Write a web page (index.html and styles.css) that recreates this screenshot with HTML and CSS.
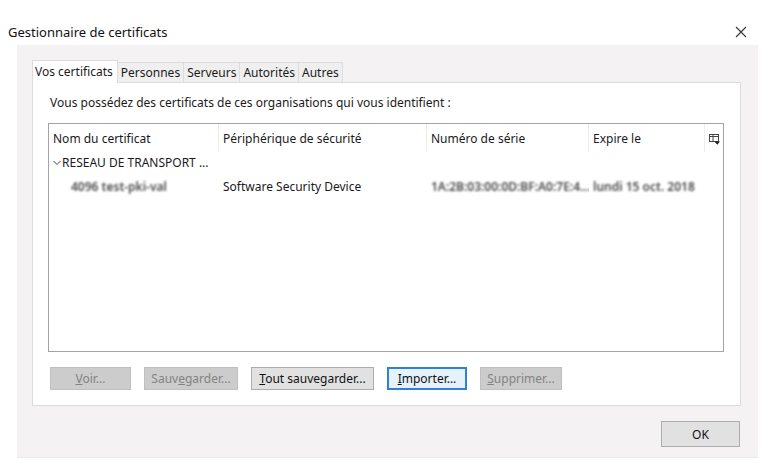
FILE: index.html
```html
<!DOCTYPE html>
<html lang="fr">
<head>
<meta charset="UTF-8">
<title>Gestionnaire de certificats</title>
<link rel="stylesheet" href="styles.css">
</head>
<body>
<div class="dialog">
  <!-- barre de titre -->
  <div class="titlebar">
    <span class="title">Gestionnaire de certificats</span>
    <span class="close">
      <svg width="12" height="12" viewBox="0 0 12 12"><path d="M1 1 L11 11 M11 1 L1 11" stroke="#333" stroke-width="1.1" fill="none"/></svg>
    </span>
  </div>

  <div class="panel">
    <div class="tabs">
      <div class="tab active">Vos certificats</div>
      <div class="tab">Personnes</div>
      <div class="tab">Serveurs</div>
      <div class="tab">Autorités</div>
      <div class="tab">Autres</div>
    </div>

    <div class="tab-body">
      <p class="intro">Vous possédez des certificats de ces organisations qui vous identifient :</p>

      <div class="tree">
        <div class="tree-head">
          <div class="col c1">Nom du certificat</div>
          <div class="col c2">Périphérique de sécurité</div>
          <div class="col c3">Numéro de série</div>
          <div class="col c4">Expire le</div>
          <div class="col c5">
            <svg width="11" height="11" viewBox="0 0 11 11">
              <rect x="0.5" y="0.5" width="9" height="7" fill="none" stroke="#444"/>
              <path d="M0.5 2.5 H9.5 M4 0.5 V7.5" stroke="#444" fill="none"/>
              <path d="M5.5 7.5 H11 L8.25 10.8 Z" fill="#222"/>
            </svg>
          </div>
        </div>
        <div class="tree-row group">
          <div class="col c1"><span class="twisty">
            <svg width="8" height="6" viewBox="0 0 8 6"><path d="M0.5 1 L4 4.5 L7.5 1" stroke="#444" fill="none"/></svg>
          </span>RESEAU DE TRANSPORT ...</div>
        </div>
        <div class="tree-row">
          <div class="col c1 child"><span class="blur">4096 test-pki-val</span></div>
          <div class="col c2">Software Security Device</div>
          <div class="col c3"><span class="blur">1A:2B:03:00:0D:BF:A0:7E:4...</span></div>
          <div class="col c4"><span class="blur">lundi 15 oct. 2018</span></div>
        </div>
      </div>

      <div class="actions">
        <button class="btn off w81"><u>V</u>oir...</button>
        <button class="btn off w94">Sauv<u>e</u>garder...</button>
        <button class="btn w123"><u>T</u>out sauvegarder...</button>
        <button class="btn focus w80"><u>I</u>mporter...</button>
        <button class="btn off w82"><u>S</u>upprimer...</button>
      </div>
    </div>

    <div class="footer">
      <button class="btn ok">OK</button>
    </div>
  </div>
</div>
</body>
</html>
```

FILE: styles.css
```css
body {
  margin: 0;
  background: #fff;
  font-family: 'Noto Sans', 'Open Sans', Arial, sans-serif;
  font-size: 12px;
  color: #1a1a1a;
}
.dialog {
  width: 778px;
  height: 468px;
  display: flex;
  flex-direction: column;
}
.titlebar {
  height: 45px;
  display: flex;
  align-items: center;
  justify-content: space-between;
  padding: 18px 31px 0 8px;
  box-sizing: border-box;
}
.title {
  font-size: 13px;
  color: #111;
}
.close {
  display: flex;
}
.panel {
  width: 741px;
  height: 413px;
  margin-left: 17px;
  background: #f5f2f4;
  box-sizing: border-box;
  padding: 16px 17px 0 15px;
  display: flex;
  flex-direction: column;
  border-bottom: 1px solid #ecebeb;
}
.tabs {
  display: flex;
  height: 21px;
  align-items: flex-end;
  position: relative;
  z-index: 1;
}
.tab {
  height: 20px;
  line-height: 19px;
  padding: 0 3px;
  box-sizing: border-box;
  border: 1px solid #dcdcdc;
  border-bottom: none;
  border-left: none;
  background: #f0eff0;
  color: #1a1a1a;
}
.tab.active {
  height: 23px;
  line-height: 21px;
  margin-bottom: -1px;
  background: #fff;
  border-left: 1px solid #dcdcdc;
  padding: 0 4px 0 2px;
}
.tab-body {
  height: 324px;
  background: #fff;
  border: 1px solid #dcdcdc;
  box-sizing: border-box;
  padding: 0 16px 0 15px;
  display: flex;
  flex-direction: column;
}
.intro {
  margin: 11px 0 0 2px;
  height: 18px;
  line-height: 18px;
}
.tree {
  margin-top: 11px;
  height: 229px;
  width: 676px;
  border: 1px solid #a4a4a4;
  box-sizing: border-box;
}
.tree-head, .tree-row {
  display: flex;
}
.tree-head {
  height: 28px;
}
.tree-head .col {
  border-right: 1px solid #ececec;
  line-height: 30px;
}
.tree-head .c5 {
  border-right: none;
  display: flex;
  align-items: center;
  justify-content: center;
  padding-top: 2px;
}
.tree-row {
  height: 22px;
  line-height: 22px;
}
.tree-row.group {
  height: 20px;
  line-height: 20px;
}
.tree-row:last-child {
  height: 30px;
  line-height: 30px;
}
.col {
  box-sizing: border-box;
  padding-left: 4px;
  white-space: nowrap;
  overflow: hidden;
}
.c1 { width: 170px; }
.c2 { width: 208px; }
.c3 { width: 162px; }
.c4 { width: 116px; }
.c5 { width: 18px; padding-left: 0; }
.twisty {
  display: inline-block;
  width: 9px;
  vertical-align: 1px;
}
.child { padding-left: 22px; }
.blur {
  color: #4a4a4a;
  font-weight: 600;
  filter: blur(1.2px);
}
.actions {
  display: flex;
  gap: 13px;
  margin-top: 15px;
  margin-left: 2px;
}
.btn {
  height: 23px;
  font-family: inherit;
  font-size: 12px;
  color: #111;
  background: #e1e1e1;
  border: 1px solid #adadad;
  padding: 0;
  box-sizing: border-box;
}
.btn.off {
  background: #cccccc;
  border-color: #bfbfbf;
  color: #838383;
}
.btn.focus {
  border: 2px solid #2f82d3;
  background: #e5f1fb;
}
.w81 { width: 81px; }
.w94 { width: 94px; }
.w123 { width: 123px; }
.w80 { width: 80px; }
.w82 { width: 82px; }
.footer {
  display: flex;
  justify-content: flex-end;
  margin-top: 15px;
}
.btn.ok {
  width: 79px;
  height: 26px;
  margin-right: 1px;
}
```
